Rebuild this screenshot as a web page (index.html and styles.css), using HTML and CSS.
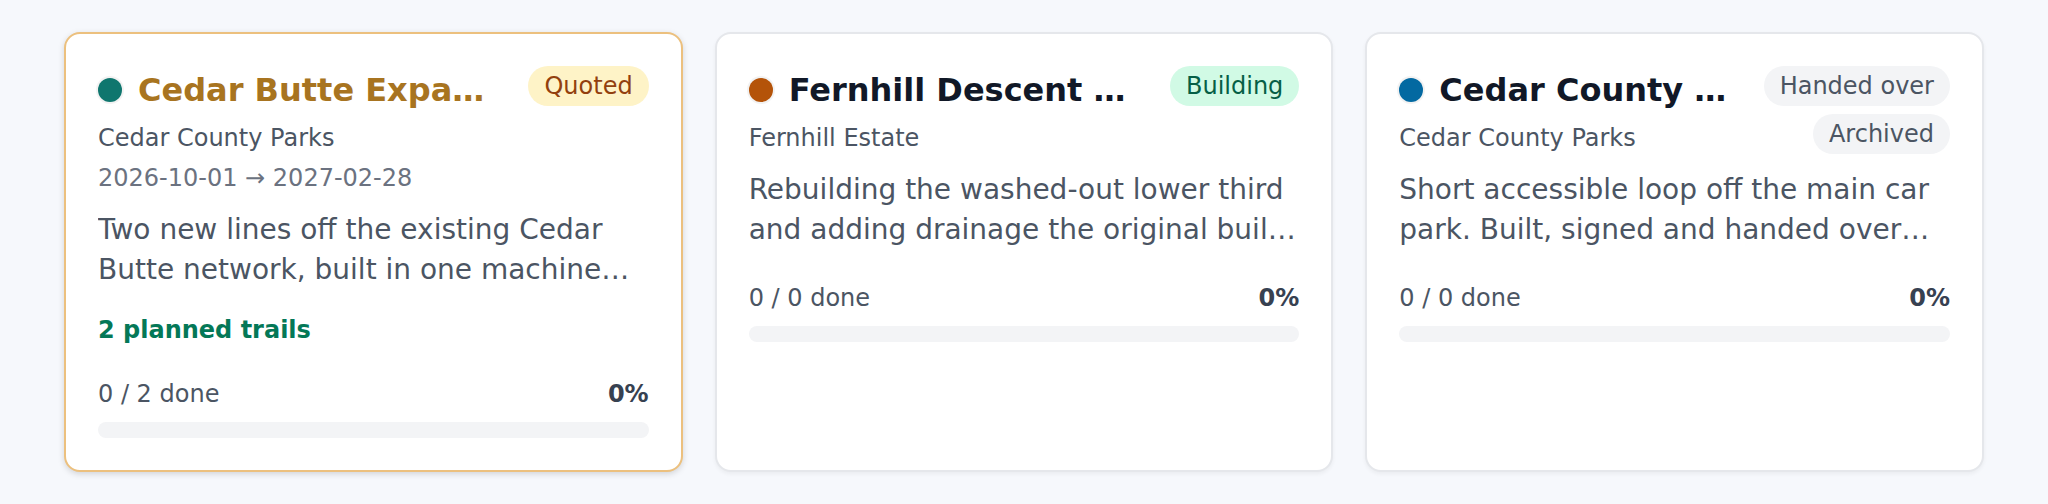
FILE: index.html
```
<!DOCTYPE html>
<html lang="en">

<head>
    <meta charset="UTF-8">
    <title>Projects</title>
    <link rel="stylesheet" href="styles.css">
</head>

<body>
    <main class="project-grid">
        <article class="card card-active">
            <header class="card-header">
                <div class="card-heading">
                    <div class="title-row">
                        <span class="dot dot-teal"></span>
                        <h2 class="card-title">Cedar Butte Expansion</h2>
                    </div>
                    <p class="client">Cedar County Parks</p>
                    <p class="dates">2026-10-01 → 2027-02-28</p>
                </div>
                <div class="badges">
                    <span class="badge badge-quoted">Quoted</span>
                </div>
            </header>
            <p class="description">Two new lines off the existing Cedar Butte network, built in one machine season.</p>
            <p class="planned">2 planned trails</p>
            <div class="progress">
                <div class="progress-row"><span>0 / 2 done</span><strong>0%</strong></div>
                <div class="progress-track"></div>
            </div>
        </article>

        <article class="card">
            <header class="card-header">
                <div class="card-heading">
                    <div class="title-row">
                        <span class="dot dot-orange"></span>
                        <h2 class="card-title">Fernhill Descent Rebuild</h2>
                    </div>
                    <p class="client">Fernhill Estate</p>
                </div>
                <div class="badges">
                    <span class="badge badge-building">Building</span>
                </div>
            </header>
            <p class="description">Rebuilding the washed-out lower third and adding drainage the original build never had.</p>
            <div class="progress">
                <div class="progress-row"><span>0 / 0 done</span><strong>0%</strong></div>
                <div class="progress-track"></div>
            </div>
        </article>

        <article class="card">
            <header class="card-header">
                <div class="card-heading">
                    <div class="title-row">
                        <span class="dot dot-blue"></span>
                        <h2 class="card-title">Cedar County Loop</h2>
                    </div>
                    <p class="client">Cedar County Parks</p>
                </div>
                <div class="badges">
                    <span class="badge">Handed over</span>
                    <span class="badge">Archived</span>
                </div>
            </header>
            <p class="description">Short accessible loop off the main car park. Built, signed and handed over last season.</p>
            <div class="progress">
                <div class="progress-row"><span>0 / 0 done</span><strong>0%</strong></div>
                <div class="progress-track"></div>
            </div>
        </article>
    </main>
</body>

</html>
```
FILE: styles.css
```
* {
    box-sizing: border-box;
}

body {
    margin: 0;
    background: #f6f8fc;
    font-family: "DejaVu Sans", sans-serif;
    color: #111827;
}

h2,
p {
    margin: 0;
}

/* cards */
.project-grid {
    display: grid;
    grid-template-columns: repeat(3, minmax(0, 1fr));
    gap: 32px;
    padding: 32px 64px;
}

.card {
    padding: 32px;
    background: #ffffff;
    border: 2px solid #e5e7eb;
    border-radius: 16px;
    box-shadow: 0 2px 4px rgba(0, 0, 0, .05);
}

.card-active {
    border-color: #ecc07e;
    box-shadow: 0 2px 6px rgba(0, 0, 0, .15);
}

/* title, client and dates on the left, badges on the right */
.card-header {
    display: flex;
    align-items: flex-start;
    justify-content: space-between;
    gap: 24px;
}

.card-heading {
    flex: 1;
    min-width: 0;
}

.title-row {
    display: flex;
    align-items: center;
    gap: 16px;
}

.dot {
    flex: none;
    width: 24px;
    height: 24px;
    border-radius: 50%;
    box-shadow: 0 0 0 2px rgba(0, 0, 0, .05);
}

.dot-teal {
    background: #0f766e;
}

.dot-orange {
    background: #b45309;
}

.dot-blue {
    background: #0369a1;
}

.card-title {
    min-width: 0;
    font-size: 32px;
    line-height: 48px;
    overflow: hidden;
    text-overflow: ellipsis;
    white-space: nowrap;
}

.card-active .card-title {
    color: #a87420;
}

.client,
.dates {
    margin-top: 8px;
    font-size: 24px;
    line-height: 32px;
    color: #4b5563;
}

.dates {
    color: #6b7280;
}

.badges {
    display: flex;
    flex: none;
    flex-direction: column;
    align-items: flex-end;
    gap: 8px;
}

.badge {
    padding: 4px 16px;
    border-radius: 20px;
    font-size: 24px;
    line-height: 32px;
    background: #f3f4f6;
    color: #4b5563;
}

.badge-quoted {
    background: #fef3c7;
    color: #92400e;
}

.badge-building {
    background: #d1fae5;
    color: #065f46;
}

.description {
    display: -webkit-box;
    margin-top: 16px;
    font-size: 28px;
    line-height: 40px;
    color: #4b5563;
    overflow: hidden;
    -webkit-box-orient: vertical;
    -webkit-line-clamp: 2;
}

.planned {
    margin-top: 24px;
    font-size: 24px;
    font-weight: bold;
    line-height: 32px;
    color: #047857;
}

/* progress */
.progress {
    margin-top: 32px;
}

.progress-row {
    display: flex;
    justify-content: space-between;
    font-size: 24px;
    line-height: 32px;
    color: #4b5563;
}

.progress-row strong {
    color: #374151;
}

.progress-track {
    height: 16px;
    margin-top: 12px;
    border-radius: 8px;
    background: #f3f4f6;
}
```
